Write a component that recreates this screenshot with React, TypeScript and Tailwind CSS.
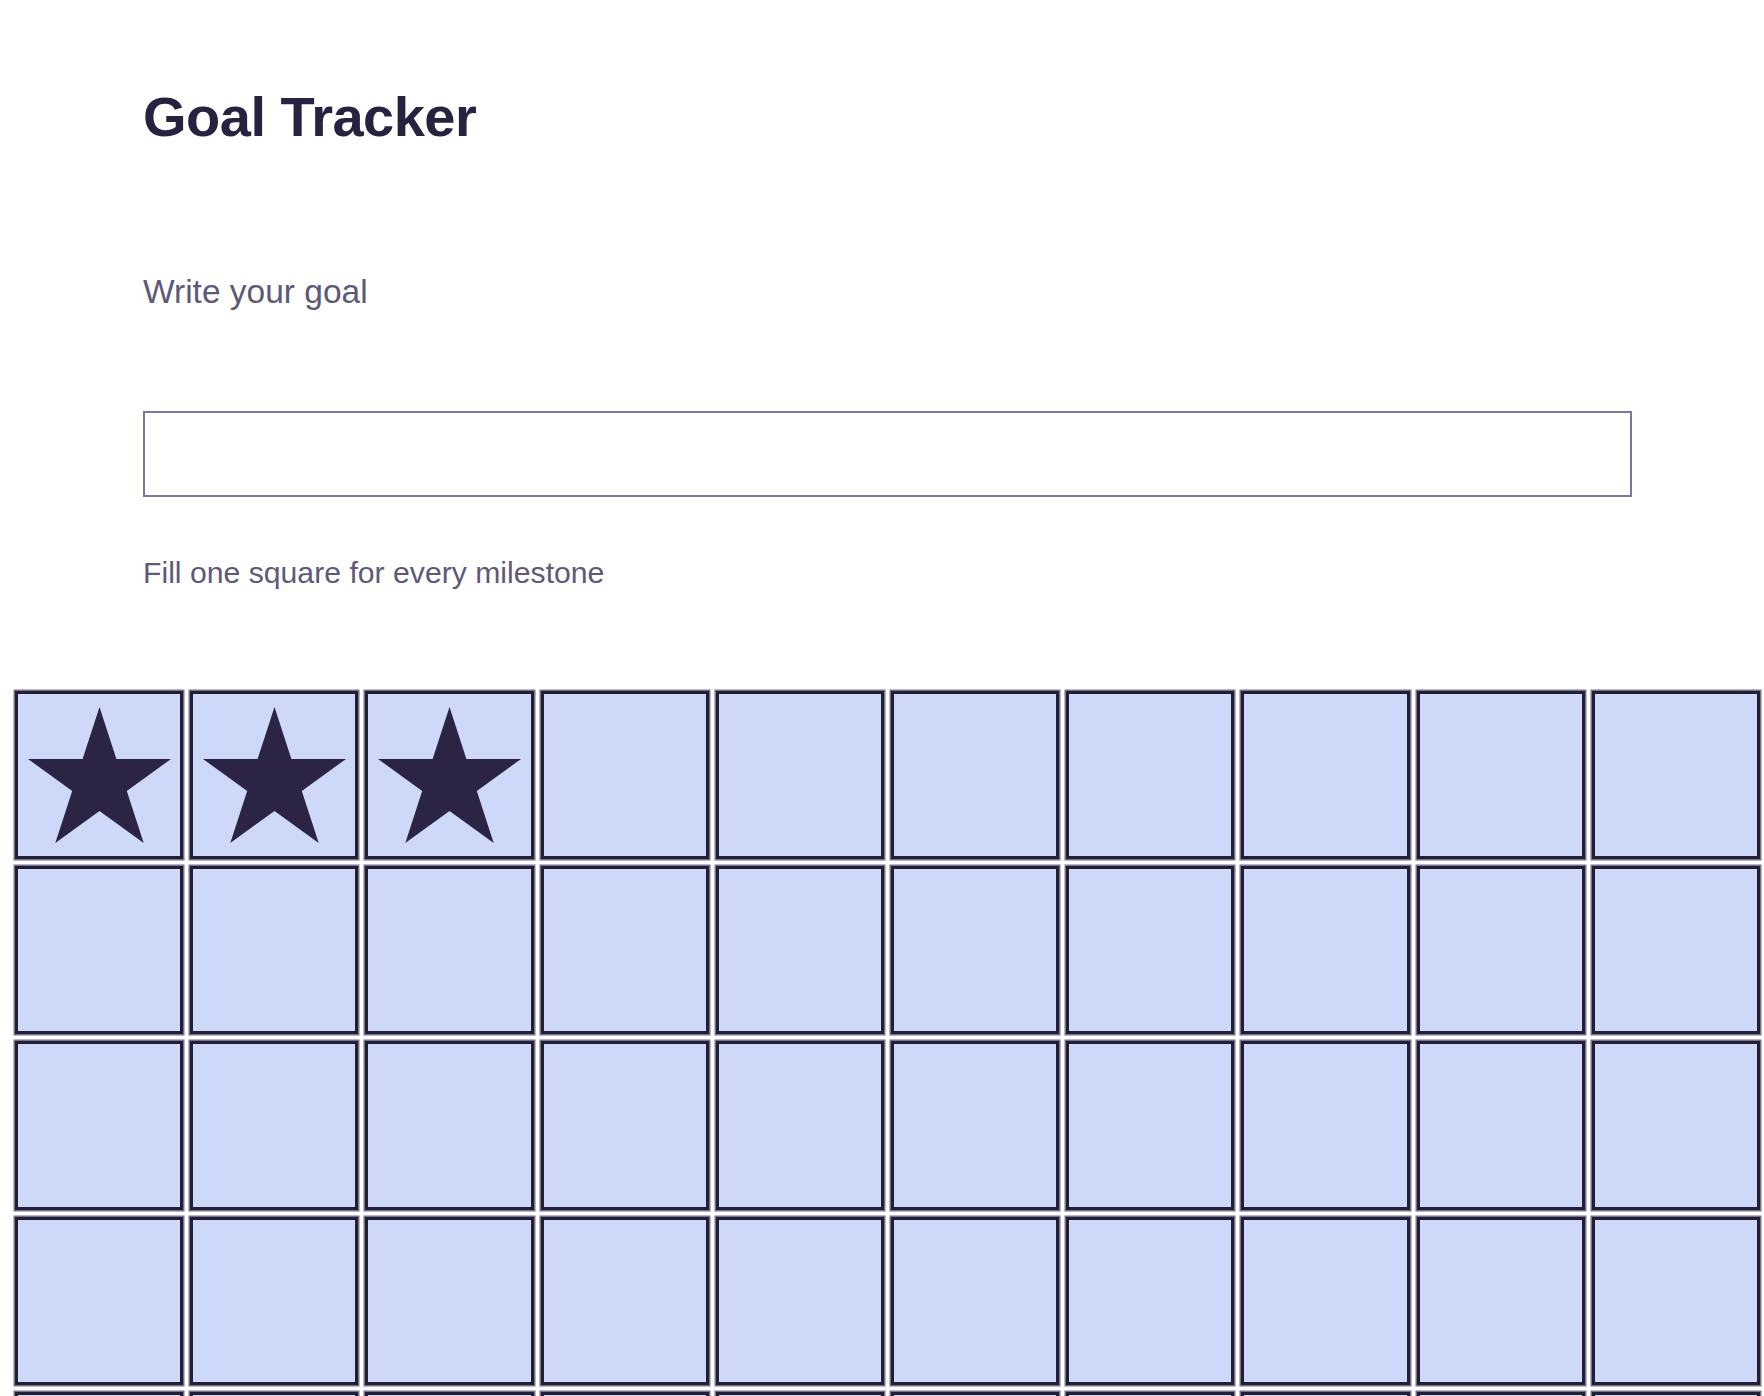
import React from "react";

function Star() {
  return (
    <svg
      viewBox="2.45 0 95.1 90.45"
      width={143}
      height={136}
      className="block"
      aria-hidden="true"
    >
      <polygon
        points="50,0 61.23,34.55 97.55,34.55 68.16,55.9 79.39,90.45 50,69.1 20.61,90.45 31.84,55.9 2.45,34.55 38.77,34.55"
        fill="#2b2444"
      />
    </svg>
  );
}

export default function App() {
  const cells = Array.from({ length: 60 }, (_, i) => i);
  return (
    <div className="min-h-screen bg-white font-['Liberation_Sans',Arial,Helvetica,sans-serif] overflow-hidden">
      <div className="pl-[143px] pt-[89px]">
        <h1 className="text-[56px] leading-[56px] font-bold tracking-[-0.5px] text-[#27223f]">
          Goal Tracker
        </h1>
        <p className="mt-[130px] text-[33.5px] leading-[33px] text-[#5e5978]">
          Write your goal
        </p>
        <input
          type="text"
          aria-label="Write your goal"
          className="mt-[103px] block w-[1489px] h-[86px] border-2 border-[#7b769e] bg-white outline-none"
        />
        <p className="mt-[61px] text-[30.2px] leading-[30px] text-[#5e5978]">
          Fill one square for every milestone
        </p>
      </div>
      <div className="mt-[103px] grid grid-cols-10 gap-[7px] pl-[15px] pr-[4px]">
        {cells.map((i) => (
          <div
            key={i}
            className="aspect-square border-[3px] border-[#221e33] bg-[#ced8f8] shadow-[0_0_0_1.5px_#77728f] flex items-center justify-center"
          >
            {i < 3 ? <Star /> : null}
          </div>
        ))}
      </div>
    </div>
  );
}
